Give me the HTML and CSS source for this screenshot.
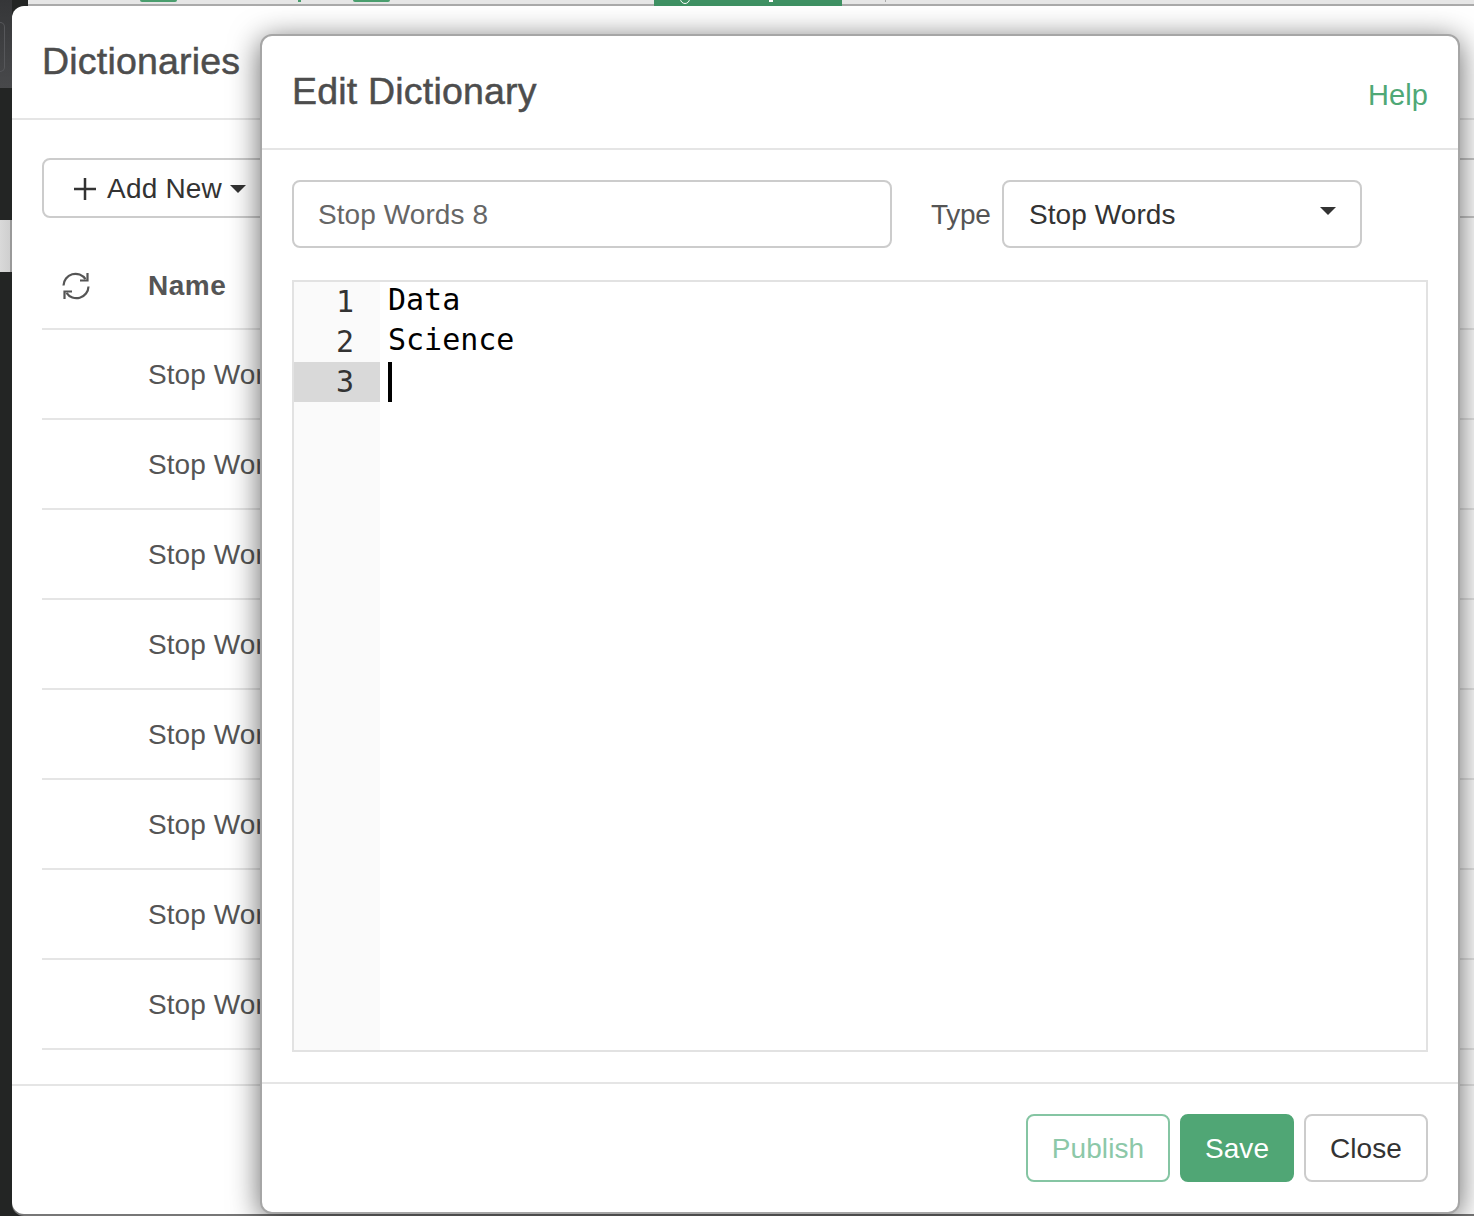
FILE: index.html
```html
<!DOCTYPE html>
<html>
<head>
   <meta charset="utf-8" />
   <title>Edit Dictionary</title>
   <link rel="stylesheet" href="styles.css">
</head>
<body>
   <!-- what is left of the page behind the dialogs -->
   <div class="backdrop">
       <div class="side-top"><div class="side-pill"></div></div>
       <div class="side-dark"></div>
       <div class="side-light"></div>
       <div class="side-dark side-fill"></div>
   </div>
   <div class="top-strip">
       <span class="tab tab-a"></span>
       <span class="tail tail-a"></span>
       <span class="tab tab-b"></span>
       <span class="tab-active">
           <span class="ring"></span>
           <span class="speck"></span>
       </span>
       <span class="tick"></span>
   </div>

   <div class="dialog dialog-list">
       <div class="list-header">
           <h4 class="dialog-title">Dictionaries</h4>
       </div>
       <div class="list-body">
           <div class="toolbar">
               <button class="add-button">
                   <svg class="plus" width="22" height="22" viewBox="0 0 22 22"><path d="M11 0v22M0 11h22" /></svg>
                   Add New
                   <span class="caret"></span>
               </button>
               <div class="toolbar-box"></div>
           </div>
           <div class="list-row list-head">
               <span class="refresh">
                   <svg width="30" height="30" viewBox="0 0 30 30">
                       <path d="M2.5 14.5a12 12 0 0 1 22-6.3M27.5 15.5a12 12 0 0 1-22 6.3" />
                       <path d="M26.5 2v7.500h-7.500M3.500 28v-7.500h7.500" />
                   </svg>
               </span>
               <span class="col-name">Name</span>
           </div>
           <div class="list-row"><span class="col-text">Stop Words 1</span></div>
           <div class="list-row"><span class="col-text">Stop Words 2</span></div>
           <div class="list-row"><span class="col-text">Stop Words 3</span></div>
           <div class="list-row"><span class="col-text">Stop Words 4</span></div>
           <div class="list-row"><span class="col-text">Stop Words 5</span></div>
           <div class="list-row"><span class="col-text">Stop Words 6</span></div>
           <div class="list-row"><span class="col-text">Stop Words 7</span></div>
           <div class="list-row"><span class="col-text">Stop Words 8</span></div>
       </div>
       <div class="list-footer"></div>
   </div>

   <div class="dialog dialog-edit">
       <div class="edit-header">
           <h4 class="dialog-title">Edit Dictionary</h4>
           <a class="help-link">Help</a>
       </div>
       <div class="edit-body">
           <div class="form-row">
               <div class="name-input">Stop Words 8</div>
               <label class="type-label">Type</label>
               <div class="type-select">Stop Words<span class="caret"></span></div>
           </div>
           <div class="editor">
               <div class="gutter">
                   <div class="line-no">1</div>
                   <div class="line-no">2</div>
                   <div class="line-no line-active">3</div>
               </div>
               <div class="code">
                   <div class="code-line">Data</div>
                   <div class="code-line">Science</div>
                   <div class="code-line"><span class="cursor"></span></div>
               </div>
           </div>
       </div>
       <div class="edit-footer">
           <button class="btn btn-publish">Publish</button>
           <button class="btn btn-save">Save</button>
           <button class="btn btn-close">Close</button>
       </div>
   </div>
</body>
</html>
```

FILE: styles.css
```css
html, body {
    margin: 0;
    width: 100%;
    height: 100%;
    overflow: hidden;
}
body {
    position: relative;
    background-color: #232524;
    font-family: "Liberation Sans", Arial, sans-serif;
    font-size: 28px;
    letter-spacing: 0.08px;
    color: #555;
}

/* page behind the dialogs */
.backdrop {
    position: absolute;
    top: 0;
    left: 0;
    bottom: 0;
    width: 12px;
    display: flex;
    flex-direction: column;
}
.side-top {
    height: 88px;
    background: linear-gradient(#353638, #48494b);
    overflow: hidden;
}
.side-pill {
    width: 4px;
    height: 48px;
    margin-top: 22px;
    border: 1px solid #56575a;
    border-left: 0;
    border-radius: 0 5px 5px 0;
}
.side-dark {
    height: 132px;
    background-color: #232524;
}
.side-fill {
    flex: 1;
}
.side-light {
    height: 52px;
    background: linear-gradient(90deg, #d9d9d9, #cfcfcf);
    border-right: 2px solid #999;
    box-sizing: border-box;
}
.top-strip {
    position: absolute;
    top: 0;
    left: 28px;
    right: 0;
    height: 4px;
    background-color: #e6e6e6;
    border-bottom: 2px solid #aaa;
}
.tab {
    position: absolute;
    top: 0;
    width: 37px;
    height: 2px;
    background-color: #4a9e6e;
    border-radius: 0 0 4px 4px;
}
.tab-a { left: 112px; }
.tab-b { left: 325px; }
.tail {
    position: absolute;
    top: 0;
    width: 3px;
    height: 2px;
    background-color: #4a9e6e;
}
.tail-a { left: 270px; }
.tab-active {
    position: absolute;
    top: 0;
    left: 626px;
    width: 188px;
    height: 6px;
    background-color: #3f9163;
    overflow: hidden;
}
.ring {
    position: absolute;
    top: -6px;
    left: 26px;
    width: 8px;
    height: 8px;
    border: 1px solid #fff;
    border-radius: 50%;
}
.speck {
    position: absolute;
    top: 0;
    left: 115px;
    width: 4px;
    height: 2px;
    background-color: #fff;
}
.tick {
    position: absolute;
    top: 0;
    left: 857px;
    width: 1px;
    height: 2px;
    background-color: #aaa;
}

/* dialogs */
.dialog {
    position: absolute;
    box-sizing: border-box;
    background-color: #fff;
    display: flex;
    flex-direction: column;
}
.dialog-list {
    top: 6px;
    left: 12px;
    right: -40px;
    bottom: 2px;
    border-radius: 12px;
    box-shadow: 0 2px 0 #777;
}
.dialog-edit {
    top: 34px;
    left: 260px;
    width: 1200px;
    height: 1180px;
    border-radius: 12px;
    border: 2px solid #a6a6a6;
    box-shadow: 0 5px 30px rgba(0, 0, 0, 0.6);
}
.dialog-title {
    margin: 0;
    font-size: 37.5px;
    line-height: 44px;
    font-weight: normal;
    letter-spacing: 0.2px;
    color: #4d4d4d;
    -webkit-text-stroke: 0.5px #4d4d4d;
}

/* list dialog */
.list-header {
    height: 114px;
    box-sizing: border-box;
    padding: 33px 30px 0;
    border-bottom: 2px solid #e5e5e5;
}
.list-body {
    flex: 1;
    padding: 38px 0 0 30px;
}
.toolbar {
    display: flex;
    height: 60px;
    margin-bottom: 22px;
}
.add-button {
    width: 240px;
    height: 60px;
    box-sizing: border-box;
    padding: 2px 0 0 30px;
    display: flex;
    align-items: center;
    background-color: #fff;
    border: 2px solid #ccc;
    border-radius: 8px;
    font-family: inherit;
    font-size: 28px;
    letter-spacing: 0.2px;
    color: #333;
}
.plus {
    margin-right: 11px;
    fill: none;
    stroke: #333;
    stroke-width: 2.500;
}
.add-button .caret {
    margin-left: 8px;
}
.toolbar-box {
    flex: 1;
    margin-left: 300px;
    box-sizing: border-box;
    border-top: 2px solid #c8c8c8;
    border-bottom: 2px solid #c8c8c8;
}
.caret {
    display: inline-block;
    width: 0;
    height: 0;
    border-top: 8px solid #333;
    border-left: 8px solid transparent;
    border-right: 8px solid transparent;
}
.list-row {
    height: 90px;
    box-sizing: border-box;
    display: flex;
    align-items: center;
    border-bottom: 2px solid #e5e5e5;
}
.refresh {
    width: 106px;
    padding-left: 19px;
    padding-top: 3px;
    box-sizing: border-box;
    display: flex;
}
.refresh svg {
    fill: none;
    stroke: #555;
    stroke-width: 2.200;
}
.col-name {
    font-weight: bold;
    padding-top: 3px;
    letter-spacing: 0.5px;
}
.col-text {
    margin-left: 106px;
    padding-top: 2px;
}
.list-footer {
    height: 130px;
    border-top: 2px solid #e5e5e5;
    box-sizing: border-box;
}

/* edit dialog */
.edit-header {
    height: 114px;
    box-sizing: border-box;
    padding: 0 30px;
    display: flex;
    align-items: center;
    justify-content: space-between;
    border-bottom: 2px solid #e5e5e5;
}
.edit-header .dialog-title {
    margin-bottom: 2px;
}
.help-link {
    color: #4fa876;
    font-size: 29px;
    margin-top: 7px;
}
.edit-body {
    flex: 1;
    padding: 30px;
    display: flex;
    flex-direction: column;
}
.form-row {
    display: flex;
    align-items: center;
    height: 68px;
    margin-bottom: 32px;
}
.name-input {
    width: 600px;
    height: 68px;
    box-sizing: border-box;
    padding-left: 24px;
    line-height: 66px;
    border: 2px solid #ccc;
    border-radius: 8px;
    color: #666;
}
.type-label {
    margin-left: 39px;
    width: 71px;
    padding-top: 2px;
    letter-spacing: -0.3px;
    color: #555;
}
.type-select {
    width: 360px;
    height: 68px;
    box-sizing: border-box;
    padding: 2px 24px 0 25px;
    display: flex;
    align-items: center;
    justify-content: space-between;
    border: 2px solid #ccc;
    border-radius: 8px;
    color: #333;
}
.type-select .caret {
    margin-bottom: 8px;
}
.editor {
    flex: 1;
    display: flex;
    border: 2px solid #e2e2e2;
    font-family: "DejaVu Sans Mono", monospace;
    font-size: 30px;
    letter-spacing: 0;
    line-height: 40px;
}
.gutter {
    width: 86px;
    background-color: #fafafa;
    color: #333;
}
.line-no {
    height: 40px;
    padding-right: 26px;
    text-align: right;
}
.line-active {
    background-color: #d9d9d9;
}
.code {
    flex: 1;
    padding-left: 8px;
    color: #000;
}
.code-line {
    height: 40px;
    line-height: 36px;
}
.cursor {
    display: block;
    width: 4px;
    height: 40px;
    background-color: #000;
}
.edit-footer {
    height: 130px;
    box-sizing: border-box;
    padding: 30px 30px 0 0;
    display: flex;
    justify-content: flex-end;
    gap: 10px;
    border-top: 2px solid #e5e5e5;
}
.btn {
    height: 68px;
    box-sizing: border-box;
    border: 2px solid #ccc;
    border-radius: 8px;
    background-color: #fff;
    font-family: inherit;
    font-size: 28px;
    letter-spacing: inherit;
    padding: 2px 0 0;
}
.btn-publish {
    width: 144px;
    border-color: #85c5a3;
    color: #8cc8a8;
}
.btn-save {
    width: 114px;
    background-color: #50a675;
    border-color: #50a675;
    color: #fff;
}
.btn-close {
    width: 124px;
    color: #333;
}
```
